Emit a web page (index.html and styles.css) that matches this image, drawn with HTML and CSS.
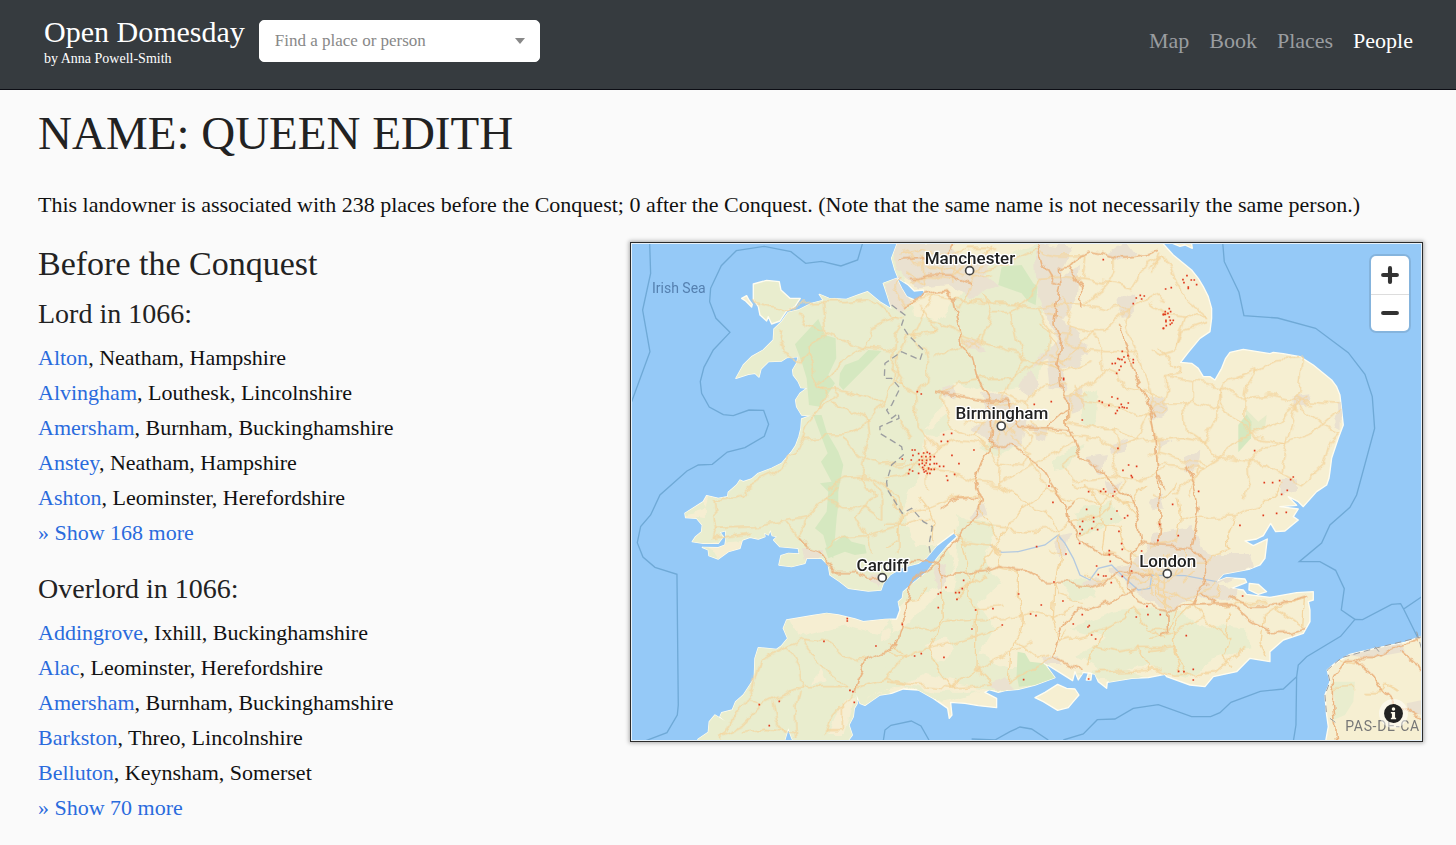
FILE: index.html
```html
<!DOCTYPE html>
<html lang="en">
	<head>
		<meta charset="UTF-8">
		<meta name="viewport" content="width=device-width, initial-scale=1">
		<title>Queen Edith | Open Domesday</title>
		<link rel="stylesheet" href="styles.css">
	</head>
	<body>
		<header class="navbar">
			<a class="brand" href="#">
				<span class="brand-name">Open Domesday</span>
				<span class="brand-by">by Anna Powell-Smith</span>
			</a>
			<form class="search">
				<select class="search-select" aria-label="Find a place or person">
					<option>Find a place or person</option>
				</select>
			</form>
			<nav class="nav">
				<a href="#">Map</a>
				<a href="#">Book</a>
				<a href="#">Places</a>
				<a class="active" href="#">People</a>
			</nav>
		</header>

		<main class="content">
			<div class="intro">
				<h1>NAME: QUEEN EDITH</h1>
				<p>This landowner is associated with 238 places before the Conquest; 0 after the Conquest. (Note that the same name is not necessarily the same person.)</p>
			</div>
			<div class="row">
				<section class="col">
					<h2>Before the Conquest</h2>
					<h3>Lord in 1066:</h3>
					<ul class="places">
						<li><a href="#">Alton</a>, Neatham, Hampshire</li>
						<li><a href="#">Alvingham</a>, Louthesk, Lincolnshire</li>
						<li><a href="#">Amersham</a>, Burnham, Buckinghamshire</li>
						<li><a href="#">Anstey</a>, Neatham, Hampshire</li>
						<li><a href="#">Ashton</a>, Leominster, Herefordshire</li>
						<li><a href="#">» Show 168 more</a></li>
					</ul>
					<h3>Overlord in 1066:</h3>
					<ul class="places">
						<li><a href="#">Addingrove</a>, Ixhill, Buckinghamshire</li>
						<li><a href="#">Alac</a>, Leominster, Herefordshire</li>
						<li><a href="#">Amersham</a>, Burnham, Buckinghamshire</li>
						<li><a href="#">Barkston</a>, Threo, Lincolnshire</li>
						<li><a href="#">Belluton</a>, Keynsham, Somerset</li>
						<li><a href="#">» Show 70 more</a></li>
					</ul>
				</section>
				<section class="col">
					<div class="map">
						<svg class="map-canvas" viewBox="21 27 2367 1488" preserveAspectRatio="xMidYMid slice" role="img" aria-label="Map of places">
							<defs>
								<path id="britain" d="M815 10L815 30L800 70L810 105L820 130L850 150L868 168L895 165L900 178L870 195L845 185L830 160L815 130L775 145L785 175L800 222L768 203L728 170L700 180L664 193L612 190L583 178L595 196L560 205L520 225L490 232L470 260L447 282L445 315L415 345L380 365L355 390L333 430L370 418L390 415L402 426L408 402L430 380L470 378L485 368L520 365L515 385L503 405L505 420L520 440L528 458L547 459L525 475L512 495L515 515L530 540L557 542L530 552L528 580L522 605L512 632L500 650L470 685L440 700L400 715L380 732L355 740L345 735L335 750L310 772L308 785L280 790L245 782L235 800L180 835L182 848L215 850L232 870L230 890L212 905L202 920L235 925L280 925L295 905L285 892L302 887L303 912L300 930L280 938L232 937L250 945L252 962L280 972L310 950L345 940L352 915L375 907L400 912L420 905L418 893L430 900L436 885L442 902L456 905L446 915L465 935L520 940L523 957L490 955L468 962L462 990L500 995L540 985L545 970L590 970L610 990L615 1020L645 1040L670 1060L730 1068L768 1065L775 1045L795 1020L830 998L880 985L905 968L935 932L975 902L988 893L996 905L970 930L940 965L925 985L905 1012L870 1040L835 1070L832 1090L820 1100L825 1125L815 1152L780 1153L715 1160L690 1152L640 1140L605 1135L560 1142L485 1155L475 1180L488 1210L470 1232L455 1243L400 1238L390 1270L388 1330L355 1380L332 1400L322 1425L290 1433L285 1445L300 1458L270 1440L253 1460L250 1492L220 1512L210 1530L475 1530L490 1480L500 1508L510 1530L660 1530L682 1500L672 1470L685 1445L688 1420L697 1405L695 1380L705 1405L720 1411L740 1397L765 1380L800 1375L835 1362L880 1365L925 1390L968 1420L973 1450L981 1440L977 1402L1020 1405L1060 1412L1115 1418L1115 1390L1080 1372L1092 1364L1120 1372L1140 1367L1180 1363L1230 1350L1290 1328L1258 1284L1300 1310L1343 1337L1350 1310L1360 1335L1375 1312L1410 1317L1420 1340L1445 1360L1447 1342L1520 1330L1570 1328L1620 1318L1625 1325L1695 1350L1740 1355L1765 1325L1835 1310L1875 1270L1935 1280L1935 1250L1975 1215L2035 1195L2055 1160L2055 1125L2050 1100L2065 1095L2065 1070L2015 1073L1935 1087L1865 1078L1855 1065L1820 1060L1865 1042L1860 1032L1805 1028L1775 1040L1795 1017L1875 1002L1905 990L1920 970L1927 912L1885 932L1860 918L1895 912L1915 902L1937 865L1952 890L1980 888L2020 855L2005 845L2020 822L1965 815L2015 811L1990 785L2020 800L2035 815L2075 770L2105 750L2112 730L2115 710L2120 670L2140 610L2155 570L2145 480L2135 455L2120 435L2065 390L2025 365L1975 356L1945 352L1935 356L1855 343L1815 352L1802 370L1790 400L1770 435L1755 425L1735 425L1720 400L1700 385L1667 382L1690 352L1725 310L1755 290L1760 250L1760 220L1750 185L1735 155L1720 130L1700 105L1645 60L1600 10Z"/>
								<clipPath id="land"><use href="#britain"/></clipPath>
								<!-- bends the straight segments of roads and fields -->
								<filter id="wiggle" filterUnits="userSpaceOnUse" x="0" y="0" width="2500" height="1600">
									<feTurbulence type="fractalNoise" baseFrequency=".02" numOctaves="3" seed="7"/>
									<feDisplacementMap in="SourceGraphic" scale="34" xChannelSelector="R" yChannelSelector="G"/>
								</filter>
							</defs>
							<rect class="sea" width="2500" height="1600"/>

							<!-- territorial waters -->
							<g class="boundary">
								<path d="M74 20L77 115L53 225L75 350L20 500M713 24L698 75L648 93L590 79L542 85L498 50L418 34L334 47L289 92L257 160L254 200L273 250L315 292L265 345L237 397L226 440L230 475L253 516L295 539L325 542L372 525L416 526L431 568L418 604L360 638L307 651L262 688L220 690L186 708L105 780L77 840L47 875L37 923L54 966L90 997L156 1018L160 1410L157 1440L126 1493L60 1518"/>
								<path d="M775 1518L780 1485L798 1471L859 1458L888 1473L912 1515M1040 1512L1110 1515L1155 1490L1185 1476L1220 1482L1270 1515M1315 1515L1375 1497L1417 1454L1470 1452L1525 1420L1600 1409L1700 1445L1757 1445L1785 1433L1818 1402L1906 1369L1975 1362L2015 1325L2020 1290L2045 1265L2147 1204L2190 1153L2213 1154L2300 1108L2327 1106L2336 1122L2391 1085M2336 1122L2377 1205L2391 1245M2015 1325L2013 1470L2005 1520"/>
								<path d="M1793 20L1798 80L1842 172L1857 242L1958 249L2072 280L2170 353L2220 418L2242 485L2249 580L2195 780L2175 817L2115 870L2090 924L2023 980L2085 980L2132 1006L2158 1061L2149 1125L2190 1153"/>
							</g>

							<use href="#britain" class="land shore"/>
							<g clip-path="url(#land)">
								<g filter="url(#wiggle)">
									<path class="green" d="M0 0H790L870 240L940 260L1040 120L1240 20L1255 240L1270 340L1230 450L1080 470L990 440L900 580L890 700L830 820L870 930L960 930L990 1000L940 1060L800 1120L790 1590H0Z"/>
									<path class="green" d="M790 1200L880 1140L960 1060L1040 1080L1110 1180L1060 1260L1160 1300L1280 1290L1240 1360L1060 1370L950 1400L830 1350L780 1380ZM890 590L960 540L985 580L930 600ZM1060 640L1150 590L1170 640L1110 660ZM1000 840L1110 880L1080 990L1130 1050L1040 1120L990 1080ZM1310 1040L1390 1020L1410 1090L1340 1100ZM1350 830L1460 795L1490 850L1440 880L1360 900ZM1340 1180L1480 1130L1640 1120L1720 1170L1870 1180L1870 1240L1750 1280L1690 1330L1560 1290L1440 1310L1350 1260L1440 1210ZM1290 670L1340 640L1370 620L1340 690L1290 705ZM1365 480L1420 460L1410 580L1370 560ZM1350 1320L1480 1290L1560 1320L1490 1340Z"/>
									<path class="sand" d="M485 1140L610 1135L800 1150L760 1200L650 1170L520 1205ZM580 1290L600 1340L562 1345ZM770 1190L790 1180L795 1210L770 1220ZM710 1400L900 1320L1100 1370L930 1370L840 1350ZM900 1230L960 1210L990 1240L960 1280L920 1270ZM310 775L250 790L240 820L190 835L180 850L240 855L240 780ZM250 925L400 910L350 945L280 970ZM660 1390L690 1390L660 1500L610 1500Z"/>
									<path class="town" d="M805 20L980 20L1000 70L1100 60L1080 120L1120 150L1040 190L970 150L880 160L810 110ZM815 130L850 160L860 200L830 230L790 200L775 145ZM1230 20L1340 40L1300 130L1365 90L1355 190L1310 250L1370 290L1390 350L1350 400L1310 400L1320 470L1280 460L1270 370L1210 400L1245 360L1300 320L1270 250L1240 180ZM1020 310L1060 310L1080 345L1030 340ZM1040 580L1090 550L1065 480L1120 470L1190 520L1210 560L1190 640L1110 640L1070 600ZM1180 450L1210 400L1240 460L1210 490ZM1225 570L1265 580L1260 620L1230 610ZM1320 480L1370 460L1380 510L1340 540ZM955 460L985 450L990 490L960 490ZM1440 60L1500 20L1530 60L1490 80ZM1480 200L1525 170L1530 230L1500 250ZM1460 630L1500 615L1500 650L1460 660ZM1385 670L1440 660L1430 710L1390 690ZM1565 485L1615 480L1630 530L1580 560ZM1600 610L1640 625L1600 645ZM1680 670L1720 650L1715 700L1685 710Z"/>
									<path class="town" d="M1030 840L1080 810L1090 840L1040 860ZM920 1000L960 990L970 1040L940 1065ZM1300 900L1340 890L1320 970L1295 965ZM1370 1040L1420 1020L1440 1040L1400 1055ZM1440 740L1490 740L1470 780L1445 775ZM1520 990L1560 950L1590 890L1700 870L1730 950L1760 960L1880 960L1890 1000L1780 1050L1840 1060L1830 1090L1760 1100L1720 1080L1640 1130L1580 1100L1520 1060L1450 1000ZM1250 1270L1300 1260L1310 1290L1270 1290ZM1090 1350L1140 1330L1170 1360L1110 1365ZM530 940L590 940L600 970L540 975ZM740 1020L775 1010L770 1050L740 1040ZM1570 790L1610 770L1620 830L1590 830ZM2000 480L2050 475L2050 515L2005 520ZM1970 740L2010 730L2010 770L1970 780ZM2130 500L2150 500L2150 580L2132 570Z"/>
								</g>
								<path class="forest" d="M510 328L580 252L600 300L632 310L634 370L610 420L630 445L585 515L552 510L545 430L530 380ZM645 415L660 390L700 375L730 345L770 348L720 400L655 465L642 450ZM565 540L590 540L605 590L640 650L655 690L640 770L640 810L635 850L625 970L612 960L595 900L570 880L605 830L610 770L585 745L620 740L588 680L608 655ZM600 940L660 900L680 920L720 930L725 955L690 960L660 950L610 970Z"/>
								<path class="forest" d="M1130 95L1190 90L1225 145L1238 155L1232 210L1210 200L1190 175L1120 150ZM1178 1250L1200 1255L1215 1280L1255 1285L1295 1330L1230 1350L1182 1355L1175 1320Z"/>
								<path class="forest" d="M1840 570L1865 538L1880 560L1878 610L1840 652Z"/>
								<path class="forest pale" d="M1860 520L1900 560L1925 540L1920 580L1875 590Z"/>
							</g>
							<g class="land shore">
								<path d="M385 147L425 136L463 140L468 165L495 190L526 190L510 215L485 228L465 258L440 267L430 245L425 258L405 240L400 215L385 192Z" class="isle"/>
								<path d="M350 190L365 182L372 195L382 208L380 216L362 198Z"/>
								<path d="M1230 1388L1260 1372L1298 1348L1325 1360L1350 1362L1362 1380L1345 1400L1330 1418L1298 1426L1255 1400Z"/>
								<path d="M1873 1045L1900 1048L1925 1070L1900 1078L1872 1065Z"/>
								<path d="M1390 1315L1400 1315L1398 1335L1384 1335ZM1630 20L1665 34L1680 30L1702 40L1700 26Z"/>
								<path d="M2400 1200L2340 1222L2250 1240L2175 1258L2130 1285L2107 1305L2115 1340L2100 1380L2105 1440L2110 1475L2100 1530H2400Z"/>
							</g>
							<path class="green" d="M2120 1340L2190 1340L2185 1400L2160 1440L2125 1455L2130 1400Z"/>
							<path class="town" d="M2170 1260L2330 1225L2340 1250L2230 1270ZM2345 1405L2391 1395V1440L2350 1430Z"/>
							<path class="river" d="M1095 930L1130 952L1180 950L1260 930L1300 900L1320 925L1345 970L1365 1020L1395 1035L1420 1000L1460 990L1500 1030L1540 1065L1575 1060L1580 1020L1680 1022L1775 1040M1300 900L1310 915"/>

							<g filter="url(#wiggle)">
								<!-- minor roads, a group for each part of the country -->
								<g class="road">
									<path d="M382 200L420 210L490 228L520 210L560 200L610 200L665 200L720 195L760 210L800 245L835 252M520 235L540 270L600 290M470 275L465 320L475 350L520 375L557 355L560 320L605 298L595 200M605 298L660 320L710 340L760 342L808 350M710 340L735 310L740 280L790 255L820 245M710 340L660 370L620 415L575 450L570 400L557 355M575 450L600 465L630 465L680 475L730 490L780 492M575 450L600 475L585 520L545 570L535 605L515 650L445 715L370 750L340 785L265 795L275 880M630 465L625 490L585 520M615 508L670 520L730 560L780 492L800 450L805 380L810 300L830 270M730 560L665 600L610 600L535 608M730 560L735 620L715 680L710 725L745 780L720 820L685 845L730 920L735 960M660 610L680 650L760 685L840 680M610 760L660 730L735 725L800 770L825 800L825 960M640 750L600 790L545 845L460 860L390 875L275 880L265 910L380 895M545 845L540 880L522 910L480 860M600 790L660 815L720 818L770 850L770 790L745 740M600 940L650 908L720 905L825 875"/>
									<path d="M285 1510L310 1455L345 1430L385 1360L410 1270L450 1250L530 1213L600 1220L650 1260L700 1282L725 1275M485 1235L525 1300L535 1355L500 1365L410 1410L370 1395M530 1213L560 1260L610 1310L670 1355L535 1355M410 1410L350 1470L290 1500M445 1400L455 1460L480 1495M520 1370L510 1420L515 1510M350 1490L430 1480L515 1490M690 1360L780 1330L840 1345M780 1330L840 1260M680 1380L620 1450L600 1500M655 1400L655 1490L600 1490"/>
								</g>
								<g class="road" transform="translate(780)">
									<path d="M40 130L30 160L60 210L150 180L200 190L330 205L380 205L460 215L540 205L600 212L670 225L740 215L790 190M100 60L130 100L200 100L240 120L330 100L450 45L510 60L600 60M330 30L300 60L280 110L250 160L220 220M60 40L90 90L160 80L240 40L320 40M70 140L130 125L200 130L260 70L340 35M100 210L140 260L150 290L60 300L35 370L30 440L95 475M150 180L115 230L75 310L120 340L130 380L125 440L95 475L100 580L160 640M140 260L200 280L235 300L290 320L350 340L400 360L460 385L530 375L580 340L660 350L750 350M230 300L250 330L190 350L140 370M290 320L320 230L380 230L395 320L420 370L380 430L355 485M320 230L290 180L320 205M380 230L440 180L460 130L540 125L590 130L600 60M460 215L490 290L480 360L430 390L380 430L290 430L220 440L170 490M530 190L560 270L540 330L580 340L620 290L660 290L740 215L720 260L750 340L780 420L800 490M560 270L620 290L640 320L650 400L700 420L720 460L830 480M600 60L590 130L690 145L740 160L790 80L840 60M690 60L690 110L670 145L640 170L600 212M740 215L800 180L840 200M560 470L640 440L660 400M560 470L600 500L680 510L760 540L840 530M560 470L550 560L640 580L700 580L750 620L840 610M340 470L420 500L480 450L540 440M420 500L455 580L545 600L640 610L690 640L750 620M355 485L300 540L270 600L300 630L340 680L410 690L430 650L380 600M270 600L200 580L170 490M160 640L220 620L310 630M160 640L120 680L60 720L0 730M0 690L60 690L120 700L200 710L270 740L340 750L430 700L520 650L560 620M340 630L350 680L345 750M120 610L125 760M410 580L440 600L420 650L460 720L500 770M580 650L530 690L560 740L640 730L690 720L760 740L840 700M690 580L700 640L680 690L720 740L700 780M800 490L780 560L750 620M480 290L560 300M490 360L560 370M500 390L540 410L620 380M20 400L60 460M40 560L80 610"/>
									<path d="M50 60L110 40L150 60L200 50M60 110L120 150L110 60M200 60L210 140M250 50L270 130L320 120M170 60L180 130M300 490L350 510L400 500M310 590L340 560L400 600M320 540L360 600L410 550M350 530L330 620M240 560L300 560M440 590L490 600M480 230L530 240M470 270L540 390M460 380L520 400M570 450L600 520M540 480L610 480M240 310L280 330M250 340L290 300"/>
								</g>
								<g class="road" transform="translate(1575)">
									<path d="M0 100L40 60L60 90L80 150L100 190L170 250L110 240L50 235L0 200M170 262L100 285L80 345L30 360L0 345M110 240L90 300L80 345M30 340L60 380L90 415L50 425L50 470L40 510M50 425L130 440L205 452L250 430L320 405L380 375L455 370M320 405L290 450L285 490L285 550L295 600L250 630L205 665L160 620L110 585L105 510L40 510M205 452L280 490L350 480L430 495L565 505M455 370L440 470L430 495L520 570L570 590M205 452L210 500L250 550L295 600L350 580L430 520M205 452L200 550L160 620L100 610L0 620M130 440L130 495L180 520L210 510M130 495L105 510M295 600L410 625L500 590L520 570L565 530M410 625L440 510M410 625L340 630L295 680L210 665L160 700L20 690M295 680L350 685L390 720L400 650L410 625M295 680L300 740L280 790M390 720L450 750L520 690L540 620L570 590M20 690L30 640L0 550M0 650L110 680L180 690M160 700L70 780M140 695L120 790"/>
									<path d="M430 480L480 510M440 520L470 480M420 510L450 530M0 490L50 530M0 520L40 500M30 50L10 110"/>
								</g>
								<g class="road" transform="translate(780 750)">
									<path d="M0 0L30 60L50 90L130 70L210 40L280 30M340 0L400 40L480 80L520 135L550 110M280 30L290 80L340 170L300 230L250 300L210 340M240 110L320 130L420 140L520 135M340 170L370 130L410 70L490 10L550 45L640 50M50 90L40 160L0 180M100 30L130 70L150 110L140 170M0 120L80 120L140 100M210 140L230 170L320 180L340 210M320 180L350 250L400 260L400 330L415 400L410 440L380 470L370 590M400 260L330 245M520 135L530 200L510 280L505 400L525 470L550 440M230 170L250 260L245 340L275 370L350 360M170 270L175 400L130 490L160 560L195 610M55 420L130 435L190 410L270 405L380 400L450 385L505 395M275 370L270 550L320 600M130 490L200 475L280 450L350 425M0 590L100 600L195 610L320 600M195 610L270 560L370 500L440 470M130 490L60 520L0 500M60 520L20 470M385 465L460 520L490 510M210 320L300 270M510 285L520 330L570 350L600 360M525 470L600 450L660 430L720 400L740 370M660 430L640 470L600 540M625 480L700 500L760 490L840 490M500 400L560 370M580 150L640 120L700 130L720 190L760 220M640 50L690 20L760 110M600 0L640 50L660 130L650 200L700 210M560 0L640 20L740 60L780 0M690 50L650 90L560 110M610 260L640 290L690 280L720 320M370 590L440 550L500 520M640 560L755 555L830 550M760 490L790 540L780 560M740 370L790 430L840 460M60 345L100 340L120 310M490 200L530 210"/>
								</g>
								<g class="road" transform="translate(1575 750)">
									<path d="M0 20L50 40L80 0M85 95L160 100L250 95L340 60L400 0M80 40L90 100L80 170L0 190M250 100L230 150L240 190L190 210L165 240L60 240M100 190L100 260L50 290L0 280M10 300L60 310L100 340L180 310L200 290M50 290L40 370M20 320L80 330L130 350M130 360L160 400L200 430L240 460L220 520L245 550M130 360L80 410L70 470L80 520L120 570M160 400L80 440L0 460M340 400L330 470L350 510M340 400L380 370L460 340L455 430M380 370L450 420M350 350L300 350L220 360M160 330L200 340L210 300M0 500L70 490L90 560M0 550L80 570L200 560L280 490M240 380L230 460M0 430L60 430L80 380M0 240L40 260L80 270L90 250M20 260L20 330L60 370M550 610L610 607M640 620L690 620L710 595L740 615M620 530L570 520"/>
									<path d="M-60 230L0 260L60 210M-40 300L10 260L40 330M-50 260L60 270M-20 320L20 300L60 340M-10 220L10 330M40 210L50 300M70 230L130 240M90 300L140 260M-80 270L-20 290"/>
								</g>

								<!-- main roads -->
								<g class="motorway">
									<path d="M840 215L900 180L960 165L990 200L1000 260L1015 330L1045 370L1060 430L1090 500L1100 570L1095 650L1060 700L1050 745L1072 800L1060 840L1020 880L980 930L940 980L880 1020L855 1050L845 1120L830 1170L815 1220L790 1250L728 1275L700 1330L690 1375M1095 630L1160 630L1210 670L1260 710L1290 760L1325 820L1330 850L1360 905L1420 950L1480 970L1520 990M1232 24L1250 90L1280 140L1305 150L1300 100L1330 90L1350 70L1395 50M1305 150L1295 210L1290 270L1310 320L1300 400L1305 460L1325 490L1330 570L1350 640L1380 680L1430 700L1470 745L1515 790L1540 860L1550 920M1400 50L1500 72L1560 65L1600 45M1330 90L1370 160L1370 220M845 130L880 130L910 120L980 120L1040 150M820 80L900 70L960 80L990 20M930 475L1000 485L1070 500L1150 495L1190 580L1260 580L1290 550L1325 520M1260 580L1350 590"/>
									<path d="M950 1018L1030 1015L1080 1008L1125 992L1190 1005L1250 1040L1330 1040L1400 1055L1450 1040L1480 1010L1580 1020M855 980L910 978L940 1000L955 1030M522 910L545 935L580 945L610 985L640 1010L690 1010L740 1030L770 1025M1280 1265L1320 1160L1360 1130L1430 1110L1500 1075L1535 1065M1280 1265L1310 1280L1370 1305M1350 800L1325 820M950 825L1000 790L1060 790"/>
									<path d="M1520 990L1510 1060L1540 1100L1600 1120L1640 1130L1705 1110L1720 1060L1745 1050L1740 990L1700 940L1600 935L1550 920L1520 960ZM1600 720L1605 840L1600 935M1685 690L1710 750L1725 820L1700 935M1575 530L1590 610L1600 720L1620 760M1480 270L1540 450L1590 550M1705 1110L1820 1105L1880 1160L1940 1195L2000 1195L2040 1180M1810 1085L1870 1110L1950 1110L2050 1085M1730 1070L1770 1105M2125 1325L2170 1270L2240 1270L2300 1240L2391 1215M2195 1275L2240 1320L2270 1365L2310 1405L2391 1455M2125 1325L2125 1400L2135 1518M2330 1250L2370 1285L2391 1320M1625 1130L1628 1190L1605 1205"/>
								</g>
							</g>

							<path class="country" d="M800 210L840 240L830 270L850 300L895 345L885 375L830 350L780 385L778 430L800 430L825 460L800 510L785 525L800 550L820 535L822 550L765 575L765 595L830 635L835 660L800 690L785 740L788 765L832 835L860 820L895 860L922 875L912 930L918 965"/>
							<path class="coastline" d="M2391 1205L2250 1240L2150 1268L2107 1305L2115 1340L2100 1380L2105 1440M2115 1450L2135 1465M2375 1190L2391 1245M2250 1235L2262 1250"/>

							<!-- places -->
							<g class="places-dots">
								<path d="M832 672h0M832 1168h0M667 1151h0M667 1158h0M597 1219h0M753 1233h0M675 1366h0M684 1370h0M688 1402h0M463 1399h0M403 1409h0M433 1472h0"/>
								<path transform="translate(780)" d="M655 74h0M745 206h0M754 189h0M766 181h0M770 192h0M778 183h0M835 239h0M835 280h0M712 349h0M729 362h0M717 366h0M704 373h0M711 374h0M720 382h0M745 374h0M745 383h0M699 371h0M691 385h0M682 386h0M708 394h0M703 405h0M695 415h0M536 430h0M536 434h0M97 470h0M109 477h0M499 500h0M448 508h0M643 498h0M652 502h0M681 486h0M698 491h0M672 511h0M709 508h0M712 516h0M703 518h0M718 518h0M730 504h0M726 519h0M697 527h0M692 535h0M592 555h0M176 599h0M200 595h0M169 619h0M188 619h0M267 645h0M201 661h0M222 686h0M82 645h0M90 645h0M84 661h0M79 675h0M101 656h0M116 654h0M127 652h0M134 656h0M110 665h0M123 665h0M136 665h0M148 665h0M103 675h0M112 676h0M125 676h0M136 674h0M103 688h0M112 685h0M119 691h0M124 684h0M131 699h0M135 688h0M148 686h0M155 686h0M164 694h0M176 694h0M113 697h0M116 704h0M123 708h0M131 702h0M139 703h0M148 703h0M101 715h0M118 711h0M127 715h0M135 715h0M74 704h0M83 708h0M71 716h0M185 723h0M209 718h0M188 736h0M699 640h0M731 690h0M755 694h0M714 706h0M739 722h0M742 727h0M492 753h0M611 770h0M656 762h0M647 769h0M662 770h0M689 770h0"/>
								<path transform="translate(1575)" d="M47 162h0M64 158h0M99 134h0M111 122h0M124 135h0M133 135h0M102 143h0M115 156h0M115 160h0M140 149h0M58 221h0M46 230h0M62 230h0M41 238h0M46 238h0M54 235h0M58 246h0M48 256h0M48 260h0M61 256h0M70 256h0M66 264h0M61 268h0M49 272h0M41 280h0M314 647h0M343 743h0M368 743h0M389 737h0M422 734h0M430 726h0M412 766h0M395 778h0M146 769h0"/>
								<path transform="translate(780 750)" d="M504 52h0M605 73h0M684 33h0M696 78h0M728 92h0M719 99h0M679 102h0M626 98h0M626 110h0M593 109h0M585 125h0M592 134h0M621 130h0M638 134h0M585 146h0M584 175h0M702 139h0M710 176h0M712 193h0M673 197h0M673 209h0M676 229h0M635 243h0M640 269h0M656 273h0M663 273h0M679 293h0M712 274h0M740 258h0M455 185h0M543 207h0M507 291h0M236 286h0M183 307h0M232 311h0M212 323h0M223 323h0M160 327h0M167 323h0M216 343h0M160 368h0M272 375h0M324 371h0M401 327h0M469 360h0M534 348h0M437 387h0M453 392h0M261 432h0M352 420h0M565 417h0M592 389h0M609 426h0M613 422h0M620 450h0M632 462h0M109 506h0M89 513h0M177 517h0M416 584h0M611 582h0M754 396h0M786 364h0M789 389h0M826 389h0M819 166h0M824 118h0M770 198h0"/>
								<path transform="translate(1575 750)" d="M68 58h0M85 152h0M270 121h0M340 91h0M380 85h0M409 82h0M278 333h0M109 452h0M130 553h0M86 559h0M102 560h0M130 585h0"/>
							</g>

							<g class="city">
								<circle cx="1034" cy="107" r="12"/>
								<circle cx="1129" cy="573" r="12"/>
								<circle cx="772" cy="1028" r="12"/>
								<circle cx="1627" cy="1016" r="12"/>
							</g>
							<g class="city-label">
								<text x="1035" y="87">Manchester</text>
								<text x="1131" y="553">Birmingham</text>
								<text x="773" y="1007">Cardiff</text>
								<text x="1628" y="996">London</text>
							</g>
							<text class="sea-label" x="81" y="173">Irish Sea</text>
							<text class="region-label" x="2161" y="1489">PAS-DE-CA</text>
						</svg>
						<div class="zoom">
							<button type="button" aria-label="Zoom in">
								<svg viewBox="0 0 16 16"><path d="M8 3V13M3 8H13"/></svg>
							</button>
							<button type="button" aria-label="Zoom out">
								<svg viewBox="0 0 16 16"><path d="M3 8H13"/></svg>
							</button>
						</div>
						<button class="info" type="button" aria-label="Toggle attribution">
							<svg viewBox="0 0 20 20"><path fill-rule="evenodd" d="M10 1a9 9 0 1 0 0 18a9 9 0 1 0 0-18zM10 4a1.7 1.7 0 1 1 0 3.4a1.7 1.7 0 1 1 0-3.4zM7.5 8.5H11.5V14H12.5V15.5H7.5V14H8.5V10H7.5z"/></svg>
						</button>
					</div>
				</section>
			</div>
		</main>
	</body>
</html>
```
FILE: styles.css
```css
* {
	box-sizing: border-box;
}

body {
	margin:      0;
	background:  #fafafa;
	color:       #111;
	font-family: "Liberation Serif", "Times New Roman", serif;
	font-size:   22px;
	line-height: 35px;
}

a {
	color:           #2a6bdd;
	text-decoration: none;
}

h1, h2, h3, p, ul {
	margin:  0;
	padding: 0;
}

h1, h2, h3 {
	font-weight: normal;
	color:       #222;
}

/* header */
.navbar {
	display:       flex;
	align-items:   flex-start;
	gap:           14px;
	height:        90px;
	padding:       15px 43px 0 44px;
	background:    #363b3f;
	border-bottom: 1px solid #0c0d14;
}

.brand {
	display:        flex;
	flex-direction: column;
	color:          #fff;
}

.brand-name {
	font-size:   30px;
	line-height: 33px;
}

.brand-by {
	font-size:   14px;
	line-height: 22px;
}

.search {
	position:   relative;
	flex:       0 1 281px;
	display:    flex;
	margin-top: 5px;
}

.search-select {
	appearance:    none;
	width:         100%;
	height:        42px;
	padding:       0 40px 2px 15px;
	border:        1px solid #fff;
	border-radius: 5px;
	background:    #fff;
	color:         #888;
	font-family:   inherit;
	font-size:     17px;
}

.search::after {
	content:        "";
	position:       absolute;
	right:          15px;
	top:            18px;
	border:         5px solid transparent;
	border-top:     6px solid #888;
	border-bottom:  0;
	pointer-events: none;
}

.nav {
	display:     flex;
	gap:         20px;
	margin-top:  8px;
	margin-left: auto;
}

.nav a {
	color: #9a9da0;
}

.nav .active {
	color: #fff;
}

/* page */
.content {
	padding: 15px 15px 20px 20px;
}

.intro {
	padding: 0 18px;
}

h1 {
	margin-bottom: 26px;
	font-size:     47px;
	line-height:   56px;
}

.row {
	display:               grid;
	grid-template-columns: 5fr 7fr;
	margin-top:            20px;
}

.col {
	min-width: 0;
	padding:   0 18px;
}

h2 {
	margin-bottom: 10px;
	font-size:     34px;
	line-height:   44px;
}

h3 {
	margin-bottom: 9px;
	font-size:     28px;
	line-height:   35px;
}

.places {
	margin-bottom: 21px;
	list-style:    none;
}

/* map */
.map {
	position:   relative;
	height:     500px;
	padding:    1px;
	border:     1px solid #2b2b2b;
	background: #e8f2fa;
	box-shadow: 0 0 4px 1px #aaa;
}

.map-canvas {
	display: block;
	width:   100%;
	height:  100%;
}

.sea {
	fill: #95c9f7;
}

.boundary {
	fill:         none;
	stroke:       #6fa9d6;
	stroke-width: 4;
}

.land {
	fill: #f6efd2;
}

.shore {
	stroke:          #fffdf0;
	stroke-width:    4;
	stroke-linejoin: round;
}

.isle, .green {
	fill: #e9edce;
}

.sand {
	fill: #f6eed2;
}

.forest {
	fill: #d5e8c0;
}

.pale {
	opacity: .5;
}

.town {
	fill: #eae1d0;
}

.river {
	fill:         none;
	stroke:       #b3c9e0;
	stroke-width: 4;
}

.road, .motorway {
	fill:            none;
	stroke:          #f4d59f;
	stroke-width:    4;
	stroke-linejoin: round;
}

.motorway {
	stroke:       #ebb582;
	stroke-width: 5;
}

.country, .coastline {
	fill:             none;
	stroke:           #9c9ea0;
	stroke-width:     4;
	stroke-dasharray: 20 12;
}

.coastline {
	stroke-width: 3;
}

.places-dots {
	fill:           none;
	stroke:         #e03a1c;
	stroke-width:   5;
	stroke-linecap: square;
}

.city {
	fill:         #fff;
	stroke:       #444;
	stroke-width: 5;
}

.city-label {
	fill:            #222;
	stroke:          #fff;
	stroke-width:    8;
	stroke-linejoin: round;
	paint-order:     stroke;
	font-family:     Roboto, sans-serif;
	font-size:       51px;
	font-weight:     500;
	text-anchor:     middle;
}

.sea-label, .region-label {
	fill:        #5580b0;
	font-family: Roboto, sans-serif;
	font-size:   42px;
}

.region-label {
	fill:           #777;
	letter-spacing: 2px;
}

.zoom {
	position:      absolute;
	top:           13px;
	right:         13px;
	width:         38px;
	overflow:      hidden;
	border-radius: 5px;
	background:    #fff;
	box-shadow:    0 0 0 2px rgba(0, 0, 0, .1);
}

.zoom button {
	display:    block;
	width:      100%;
	height:     38px;
	padding:    8px;
	border:     0;
	background: none;
}

.zoom button + button {
	height:      37px;
	padding-top: 7px;
	border-top:  1px solid #ddd;
}

.zoom svg {
	display:        block;
	width:          22px;
	height:         22px;
	fill:           none;
	stroke:         #333;
	stroke-width:   3;
	stroke-linecap: round;
}

.info {
	position:      absolute;
	right:         14px;
	bottom:        13px;
	width:         29px;
	height:        29px;
	padding:       4px;
	border:        0;
	border-radius: 50%;
	background:    rgba(255, 255, 255, .5);
}

.info svg {
	display: block;
	width:   21px;
	height:  21px;
	fill:    #222;
}
```
